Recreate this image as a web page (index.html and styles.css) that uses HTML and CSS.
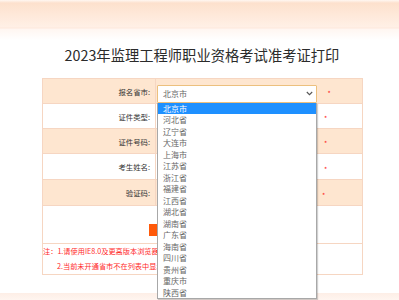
FILE: index.html
```html
<!DOCTYPE html>
<html lang="zh-CN">
<head>
<meta charset="utf-8">
<title>准考证打印</title>
<link rel="stylesheet" href="styles.css">
</head>
<body>
<div class="header"></div>
<h1 class="title">2023年监理工程师职业资格考试准考证打印</h1>
<div class="wrap">
<table class="form">
  <tr class="peach">
    <td class="lab">报名省市:</td>
    <td class="val">
      <div class="selbox">
        <div class="sel"><span>北京市</span>
          <svg class="chev" width="7" height="5" viewBox="0 0 7 5"><path d="M0.8 1 L3.5 3.7 L6.2 1" fill="none" stroke="#555" stroke-width="1.1"/></svg>
        </div>
        <ul class="list">
          <li class="on">北京市</li><li>河北省</li><li>辽宁省</li><li>大连市</li><li>上海市</li><li>江苏省</li><li>浙江省</li><li>福建省</li><li>江西省</li><li>湖北省</li><li>湖南省</li><li>广东省</li><li>海南省</li><li>四川省</li><li>贵州省</li><li>重庆市</li><li>陕西省</li>
        </ul>
      </div>
      <span class="req">*</span>
    </td>
  </tr>
  <tr>
    <td class="lab">证件类型:</td>
    <td class="val"><div class="field"></div><span class="req">*</span></td>
  </tr>
  <tr class="peach">
    <td class="lab">证件号码:</td>
    <td class="val"><div class="field"></div><span class="req">*</span></td>
  </tr>
  <tr class="r4">
    <td class="lab">考生姓名:</td>
    <td class="val"><div class="field"></div><span class="req">*</span></td>
  </tr>
  <tr class="peach r4">
    <td class="lab">验证码:</td>
    <td class="val"><div class="field short"></div><span class="req">*</span></td>
  </tr>
  <tr class="btnrow">
    <td colspan="2"><button class="btn">查询</button></td>
  </tr>
  <tr class="notes">
    <td colspan="2">
      <p>注：1.请使用IE8.0及更高版本浏览器…</p>
      <p class="n2">2.当前未开通省市不在列表中显示</p>
    </td>
  </tr>
</table>
</div>
<div class="footer"></div>
</body>
</html>
```
FILE: styles.css
```css
html, body { margin: 0; padding: 0; background: #fff; }
body { font-family: "Noto Sans CJK SC", "Noto Sans", sans-serif; color: #333; height: 300px; overflow: hidden; }
.header {
  height: 40px;
  background: linear-gradient(to bottom, #fff7f2 0px, #fde1cd 3px, #fff0e6 27px, #fde8dc 28px, #fff6f1 29px, #ffffff 40px);
}
.title {
  margin: 5px 0 0 0;
  height: 20px;
  line-height: 20px;
  font-size: 14.3px;
  font-weight: normal;
  text-align: center;
  padding-left: 5px;
  color: #2b2b2b;
}
.wrap { margin: 13px 0 0 42px; width: 321px; }
.form { border-collapse: collapse; width: 321px; }
.form td { border: 1px solid #f6d6c2; padding: 0; }
.form tr { height: 25px; }
.form tr.r4 { height: 26px; }
.form tr.peach td { background: #fee6d0; }
.lab { width: 107px; text-align: right; padding-right: 5px !important; font-size: 7.4px; color: #333; }
.val { position: relative; padding-left: 1px !important; }
.val > .req, .val > .field, .val > .selbox { vertical-align: middle; }
.selbox { display: inline-block; position: relative; width: 160px; height: 18px; }
.sel {
  box-sizing: border-box; height: 18px; width: 160px;
  border: 1px solid #ecc07e; background: #fff; border-radius: 1px;
  display: flex; align-items: center; justify-content: space-between;
  padding: 0 3px 0 5px; font-size: 8px; color: #666;
}
.list {
  position: absolute; left: 0; top: 18px; z-index: 5;
  margin: 0; padding: 0; list-style: none;
  box-sizing: border-box; width: 160px;
  background: #fff; border: 1px solid #a8a8a8; border-top: none;
  box-shadow: 1px 1px 1px rgba(0,0,0,0.18);
}
.list li { height: 11.5px; line-height: 11.5px; font-size: 8px; color: #666; padding-left: 5px; }
.list li.on { background: #1e90ff; color: #fff; }
.field { display: inline-block; width: 160px; height: 16px; }
.field.short { width: 158px; }
.req { display: inline-block; color: #ff2020; font-size: 7px; margin-left: 7px; line-height: 7px; }
.btnrow { height: 38px !important; }
.btnrow td { text-align: center; }
.btn {
  width: 108px; height: 12px; border: none; background: #ff5a0a; color: #fff;
  font-family: inherit; font-size: 7px; padding: 0; margin-top: 6px; display: inline-block; vertical-align: middle;
}
.notes { height: 31px !important; }
.notes td { color: #ff2a2a; font-size: 7.2px; padding: 0 !important; }
.notes p { margin: 0; height: 15px; line-height: 14px; white-space: nowrap; overflow: hidden; }
.notes p.n2 { padding-left: 14px; }
.footer { margin-top: 18px; height: 8px; background: linear-gradient(to bottom, #fdeee6, #fff6f1); }
```
